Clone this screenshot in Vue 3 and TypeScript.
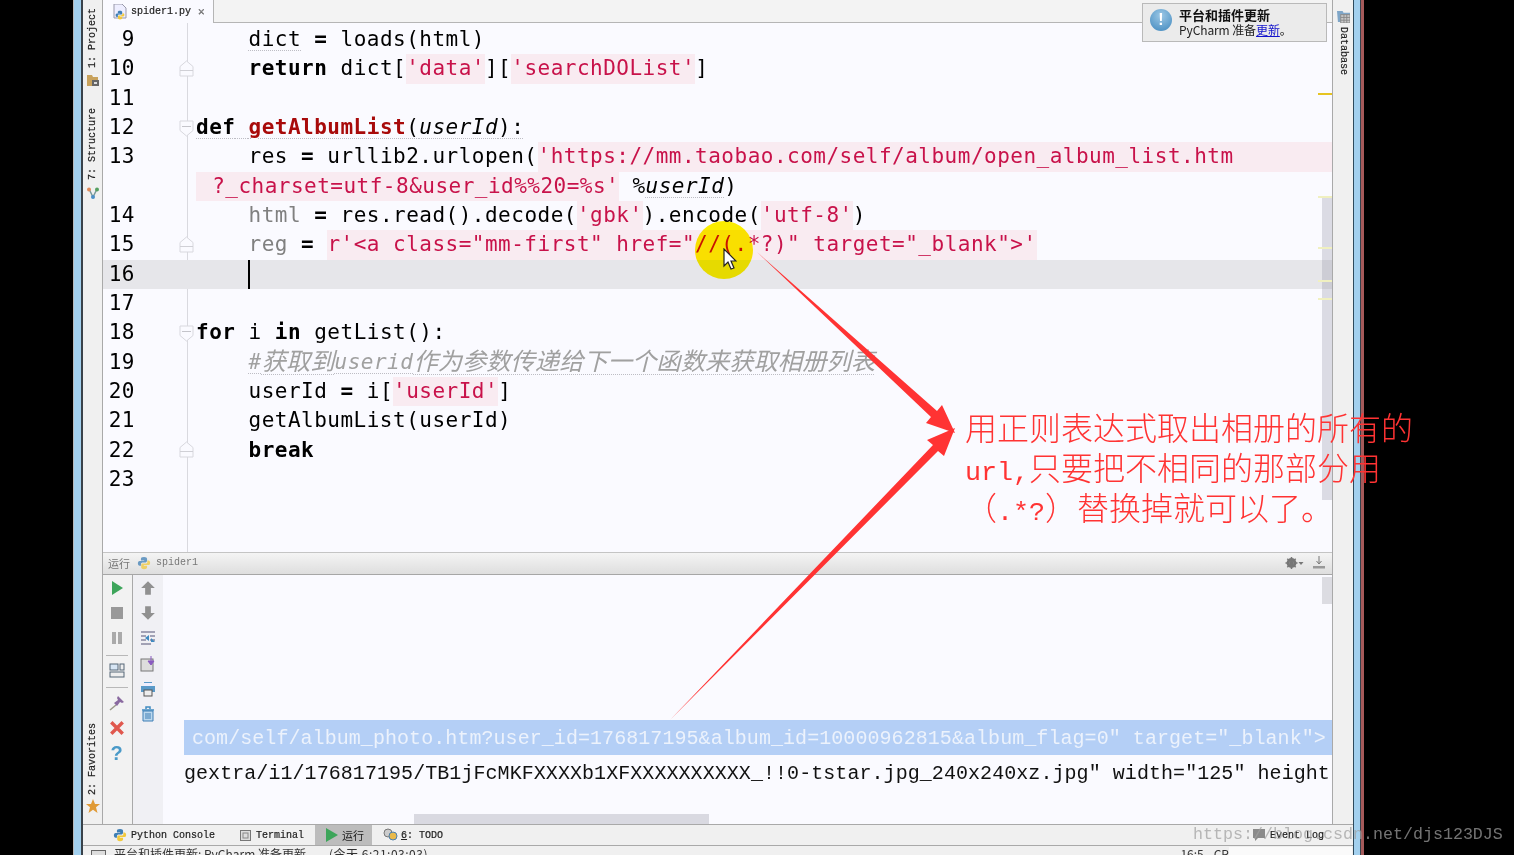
<script setup lang="ts">
type Token = { t: string; c?: string };
type Line = { n: string; fold?: "up" | "down"; tokens: Token[]; cur?: boolean };

const s = (t: string, c = ""): Token => ({ t, c });
const eq = [s(" "), s("=", "kw"), s(" ")];

const lines: Line[] = [
  { n: "9", tokens: [s("    "), s("dict", "wave"), ...eq, s("loads(html)")] },
  { n: "10", fold: "up", tokens: [s("    "), s("return", "kw"), s(" dict["), s("'data'", "str"), s("]["), s("'searchDOList'", "str"), s("]")] },
  { n: "11", tokens: [] },
  { n: "12", fold: "down", tokens: [s("def", "kw wave"), s(" ", "wave"), s("getAlbumList", "fn wave"), s("(", "wave"), s("userId", "it wave"), s("):", "wave")] },
  { n: "13", tokens: [s("    res"), ...eq, s("urllib2.urlopen("), s("'https://mm.taobao.com/self/album/open_album_list.htm", "str fill")] },
  { n: "", tokens: [s(" ?_charset=utf-8&user_id%%20=%s'", "str shift"), s(" %"), s("userId", "it wave"), s(")")] },
  { n: "14", tokens: [s("    "), s("html", "dim"), ...eq, s("res.read().decode("), s("'gbk'", "str"), s(").encode("), s("'utf-8'", "str"), s(")")] },
  { n: "15", fold: "up", tokens: [s("    "), s("reg", "dim"), ...eq, s("r'<a class=\"mm-first\" href=\"//(.*?)\" target=\"_blank\">'", "str")] },
  { n: "16", cur: true, tokens: [s("    "), s("", "caret")] },
  { n: "17", tokens: [] },
  { n: "18", fold: "down", tokens: [s("for", "kw"), s(" i "), s("in", "kw"), s(" getList():")] },
  { n: "19", tokens: [s("    "), s("#", "cm wave"), s("获取到", "cm cjk wave"), s("userid", "cm wave"), s("作为参数传递给下一个函数来获取相册列表", "cm cjk wave")] },
  { n: "20", tokens: [s("    userId"), ...eq, s("i["), s("'userId'", "str"), s("]")] },
  { n: "21", tokens: [s("    getAlbumList(userId)")] },
  { n: "22", fold: "up", tokens: [s("    "), s("break", "kw")] },
  { n: "23", tokens: [] },
];

const selected = 'com/self/album_photo.htm?user_id=176817195&album_id=10000962815&album_flag=0" target="_blank">';
const plain = 'gextra/i1/176817195/TB1jFcMKFXXXXb1XFXXXXXXXXXX_!!0-tstar.jpg_240x240xz.jpg" width="125" height';
const stripes = [196, 247, 280, 298];
const stripeTop = (y: number) => `${y - 23}px`;
</script>

<template>
  <div class="root">
    <svg class="defs" width="0" height="0">
      <defs>
        <symbol id="py" viewBox="0 0 16 16">
          <path d="M8 1C5 1 4.500 2 4.500 3.200V5H8.200V5.600H3C1.600 5.600 1 6.800 1 8.300S1.700 11 3 11H4.500V9.200C4.500 8 5.500 7.300 6.500 7.300H9.800C10.800 7.300 11.500 6.500 11.500 5.500V3.200C11.500 2 10.500 1 8 1Z" fill="#3f7fb5" />
          <path d="M8 15C11 15 11.500 14 11.500 12.800V11H7.800V10.400H13C14.400 10.400 15 9.200 15 7.700S14.300 5 13 5H11.800V6.800C11.800 8 10.800 8.700 9.800 8.700H6.500C5.500 8.700 4.800 9.500 4.800 10.500V12.800C4.800 14 5.500 15 8 15Z" fill="#f2c93c" />
        </symbol>
      </defs>
    </svg>

    <div class="frame-left"></div>
    <div class="ide">
      <div class="workspace">
        <aside class="bar-left">
          <span class="vtext">1: Project</span>
          <svg class="bar-ic first" viewBox="0 0 12 12"><path d="M0 1H5L6 3H11V6H12V12H0Z" fill="#c8a25c" /><rect x="5" y="6" width="7" height="6" fill="#666" /><rect x="7" y="8" width="3" height="2" fill="#ddd" /></svg>
          <span class="vtext structure">7: Structure</span>
          <svg class="bar-ic second" viewBox="0 0 12 12"><path d="M2 2L6 10L10 2" fill="none" stroke="#7a9a9a" stroke-width="1.500" /><circle cx="2" cy="2.500" r="2" fill="#e08a5a" /><circle cx="10" cy="2.500" r="2" fill="#55a060" /><circle cx="6" cy="10" r="2" fill="#4c8fc8" /></svg>
          <span class="grow"></span>
          <span class="vtext">2: Favorites</span>
          <svg class="star" viewBox="0 0 14 14"><path d="M7 0L9 5H14L10 8.300L11.500 14L7 10.700L2.500 14L4 8.300L0 5H5Z" fill="#e09a35" /></svg>
        </aside>

        <main class="center">
          <div class="tabbar">
            <div class="tab">
              <svg class="tab-ic" viewBox="0 0 14 16"><path d="M1 0H9L13 4V14H1Z" fill="#eef" stroke="#99a" /><use href="#py" x="2" y="6" width="10" height="10" /></svg>
              <span>spider1.py</span>
              <span class="x">✕</span>
            </div>
          </div>

          <section class="editor">
            <div v-for="l in lines" :key="l.n + l.tokens.length" class="row" :class="{ cur: l.cur }">
              <div class="num">{{ l.n }}</div>
              <div class="foldcell">
                <svg v-if="l.fold === 'up'" class="fold" viewBox="0 0 15 18"><path d="M7.500 1L14 6.500V16H1V6.500Z" fill="#fafaff" stroke="#d8d8de" /><path d="M1 10.500H14" stroke="#d0d0d6" /></svg>
                <svg v-else-if="l.fold === 'down'" class="fold" viewBox="0 0 15 18"><path d="M1 2H14V11.500L7.500 17L1 11.500Z" fill="#fafaff" stroke="#d8d8de" /><path d="M3 7.500H12" stroke="#c4c4ca" /></svg>
              </div>
              <div class="code">
                <span v-for="(tk, i) in l.tokens" :key="i" class="tok" :class="tk.c">{{ tk.t }}</span>
              </div>
            </div>
            <div class="vscroll"></div>
            <div class="stripe-top"></div>
            <div v-for="y in stripes" :key="y" class="stripe" :style="{ top: stripeTop(y) }"></div>
          </section>

          <header class="toolhead">
            <span class="run-label">运行</span>
            <svg class="head-py" viewBox="0 0 16 16"><use href="#py" /></svg>
            <span class="run-name">spider1</span>
            <span class="grow"></span>
            <svg class="gear" viewBox="0 0 18 12">
              <circle cx="6" cy="6" r="3.600" fill="none" stroke="#777" stroke-width="2.600" />
              <path d="M6 0V12M0 6H12M1.800 1.800L10.200 10.200M10.200 1.800L1.800 10.200" stroke="#777" stroke-width="1.500" />
              <path d="M13 5H18L15.500 8Z" fill="#777" />
            </svg>
            <svg class="dl" viewBox="0 0 12 13"><path d="M6 0V7M3.500 5L6 8L8.500 5" fill="none" stroke="#777" /><path d="M0 10H12V12.500H0Z" fill="#999" /></svg>
          </header>

          <section class="toolbody">
            <div class="strip one">
              <svg class="ic" viewBox="0 0 14 16"><path d="M2 1L13 8L2 15Z" fill="#3da55a" /></svg>
              <svg class="ic" viewBox="0 0 14 16"><rect x="1" y="2" width="12" height="12" fill="#999" /></svg>
              <svg class="ic" viewBox="0 0 14 16"><path d="M2 2H6V14H2ZM8 2H12V14H8Z" fill="#aaa" /></svg>
              <span class="sep"></span>
              <svg class="ic" viewBox="0 0 16 16"><rect x="1" y="1" width="8" height="6" fill="#d7e6f5" stroke="#567" /><rect x="11" y="1" width="4" height="6" fill="#eee" stroke="#567" /><rect x="1" y="9" width="14" height="5" fill="#eee" stroke="#567" /></svg>
              <span class="sep"></span>
              <svg class="ic" viewBox="0 0 16 16"><path d="M1 15L7 10" stroke="#998" stroke-width="1.500" /><path d="M9 1L15 7L13 8L11 7L8 11L5 8L9 5L8 3Z" fill="#8a6aa0" /></svg>
              <svg class="ic" viewBox="0 0 14 14"><path d="M2 2L12 12M12 2L2 12" stroke="#e0584e" stroke-width="3" /></svg>
              <span class="q">?</span>
            </div>
            <div class="strip two">
              <svg class="ic" viewBox="0 0 14 14"><path d="M7 1L13 7H9.500V13H4.500V7H1Z" fill="#909090" /></svg>
              <svg class="ic" viewBox="0 0 14 14"><path d="M7 13L13 7H9.500V1H4.500V7H1Z" fill="#909090" /></svg>
              <svg class="ic" viewBox="0 0 16 16"><path d="M1 2H15M1 14H11M1 6H6M10 6H15M1 10H6M10 10H15" stroke="#557" stroke-width="1.200" /><path d="M5 8L9 5V11Z" fill="#3f8ac0" /><path d="M11 8L15 12H11Z" fill="#3f8ac0" /></svg>
              <svg class="ic" viewBox="0 0 16 16"><rect x="1" y="3" width="12" height="12" fill="#ddd" stroke="#777" /><path d="M11 0V7M8 5L11 9L14 5Z" fill="#8a5ac0" stroke="#8a5ac0" /></svg>
              <svg class="ic" viewBox="0 0 16 16"><path d="M4 1H12V5H15V11H12V15H4V11H1V5H4Z" fill="#5a9ac8" /><rect x="4" y="9" width="8" height="6" fill="#eee" stroke="#555" /><rect x="4" y="2" width="8" height="3" fill="#eef" /></svg>
              <svg class="ic" viewBox="0 0 14 16"><path d="M1 4H13M5 3V1H9V3" fill="none" stroke="#3f8ac0" stroke-width="1.500" /><path d="M2 5H12V15H2Z" fill="#bcd8ee" stroke="#3f7fb5" /><path d="M5 7V13M7 7V13M9 7V13" stroke="#3f7fb5" /></svg>
            </div>
            <div class="console">
              <div class="con-row sel">{{ selected }}</div>
              <div class="con-row low">{{ plain }}</div>
              <div class="vscroll2"></div>
              <div class="hscroll"></div>
            </div>
          </section>
        </main>

        <aside class="bar-right">
          <svg class="db" viewBox="0 0 14 14"><path d="M0 1H6L7 3H14V5H4V13H1Z" fill="#7fa6c8" /><rect x="4" y="5" width="10" height="9" fill="#c8c8c8" stroke="#888" /><path d="M4 8H14M4 11H14M7.500 5V14M10.500 5V14" stroke="#888" /></svg>
          <span class="vright">Database</span>
        </aside>
      </div>

      <nav class="bottom">
        <span class="bt py"><svg class="bt-ic" viewBox="0 0 16 16"><use href="#py" /></svg>Python Console</span>
        <span class="bt term"><svg class="term-ic" viewBox="0 0 11 11"><rect x=".5" y=".5" width="10" height="10" fill="#ddd" stroke="#777" /><rect x="3" y="3" width="5" height="5" fill="none" stroke="#888" /></svg>Terminal</span>
        <span class="bt active"><svg class="play" viewBox="0 0 12 14"><path d="M0 0L12 7L0 14Z" fill="#3da55a" /></svg><span class="run-cn">运行</span></span>
        <span class="bt todo"><svg class="todo-ic" viewBox="0 0 15 14"><circle cx="5" cy="5" r="4" fill="#ccc" stroke="#777" /><circle cx="10" cy="8" r="4" fill="#e8b94a" stroke="#4a7fb0" /></svg><u>6</u>: TODO</span>
        <span class="grow"></span>
        <svg class="chat" viewBox="0 0 12 12"><path d="M0 0H12V9H5L2 12V9H0Z" fill="#8a8a8a" /></svg>
        <span class="bt event">Event Log</span>
      </nav>

      <footer class="status">
        <span class="check"></span>
        <span class="msg">平台和插件更新: PyCharm 准备更新</span>
        <span class="when">(今天 6:21:03:03)</span>
        <span class="grow"></span>
        <span class="pos">16:5</span>
        <span class="crlf">CR</span>
        <span class="memo"></span>
      </footer>
    </div>
    <div class="frame-right"></div>

    <div class="balloon">
      <span class="b-ic">!</span>
      <div class="b-text">
        <div class="b-title">平台和插件更新</div>
        <div class="b-msg">PyCharm 准备<a class="b-link">更新</a>。</div>
      </div>
    </div>

    <div class="spot"></div>
    <svg class="pointer" viewBox="0 0 14 22"><path d="M1 1V18L5 14L8 21L11 20L8 13H13Z" fill="#fff" stroke="#222" stroke-width="1.200" /></svg>

    <svg class="arrows" viewBox="0 0 1514 855">
      <polygon points="757,252 937,411 942,405 955,433 926,423 931,417" fill="#f33" />
      <polygon points="670,720 933,445 927,440 955,428 944,456 938,451" fill="#f33" />
    </svg>

    <div class="note">
      <div class="note-line">用正则表达式取出相册的所有的</div>
      <div class="note-line"><span class="latin">url,</span>只要把不相同的那部分用</div>
      <div class="note-line">（<span class="latin">.*?</span>）替换掉就可以了。</div>
    </div>

    <div class="mark">https://blog.csdn.net/djs123DJS</div>
  </div>
</template>

<style>
html, body { margin: 0; background: #000; }
</style>

<style scoped>
.root {
  position: relative;
  display: flex;
  width: 1514px;
  height: 855px;
  overflow: hidden;
  background: #000;
  font-family: "Liberation Mono", "Noto Sans CJK SC", monospace;
}
.defs { position: absolute; }
.grow { flex: 1; }
.frame-left {
  width: 10px;
  margin-left: 73px;
  background: linear-gradient(90deg, #b9b9b9 0 1px, #a3d0ee 1px 8px, #39424a 8px);
}
.frame-right {
  width: 11px;
  background: linear-gradient(90deg, #2e4a5c 0 1px, #a3d0ee 1px 7px, #34424c 7px 8px, #a55a5a 8px);
}
.ide {
  display: flex;
  flex-direction: column;
  width: 1270px;
  background: #f0f0f0;
}
.workspace { display: flex; height: 824px; }

/* side bars */
.bar-left {
  display: flex;
  flex-direction: column;
  align-items: center;
  width: 20px;
  padding: 8px 0 11px;
  box-sizing: border-box;
  background: #f0f0f0;
  border-right: 1px solid #a9a9a9;
}
.vtext {
  writing-mode: vertical-rl;
  transform: rotate(180deg);
  font-size: 10px;
  line-height: 12px;
  color: #222;
  white-space: pre;
  -webkit-text-stroke: .2px #222;
}
.bar-ic { width: 12px; height: 12px; flex: none; }
.bar-ic.first { margin-top: 6px; }
.structure { margin-top: 22px; }
.bar-ic.second { margin-top: 7px; }
.star { width: 14px; height: 14px; margin-top: 4px; flex: none; }
.bar-right {
  display: flex;
  flex-direction: column;
  align-items: center;
  width: 21px;
  padding-top: 10px;
  box-sizing: border-box;
  border-left: 1px solid #a9a9a9;
  background: #f0f0f0;
}
.db { width: 13px; height: 13px; flex: none; }
.vright {
  writing-mode: vertical-rl;
  margin-top: 4px;
  font-size: 10px;
  line-height: 12px;
  color: #222;
  -webkit-text-stroke: .2px #222;
}

/* center */
.center { display: flex; flex-direction: column; width: 1229px; }
.tabbar {
  display: flex;
  height: 23px;
  box-sizing: border-box;
  background: #f3f3f3;
  border-bottom: 1px solid #b5b5b5;
}
.tab {
  display: flex;
  align-items: center;
  width: 111px;
  height: 23px;
  padding-left: 10px;
  box-sizing: border-box;
  background: #fafaff;
  border-right: 1px solid #b5b5b5;
  font-size: 10px;
  color: #222;
  -webkit-text-stroke: .2px #222;
}
.tab-ic { width: 14px; height: 16px; margin-right: 4px; flex: none; }
.x { margin-left: 7px; color: #888; font-size: 11px; }

.editor {
  position: relative;
  height: 529px;
  padding-top: 2px;
  box-sizing: border-box;
  overflow: hidden;
  background: linear-gradient(#d9d9df, #d9d9df) 84px 0 / 1px 100% no-repeat, #fafaff;
  font-family: "DejaVu Sans Mono", "Noto Sans CJK SC", monospace;
  font-size: 21px;
  letter-spacing: .49px;
  color: #000;
}
.row { display: flex; height: 29.33px; line-height: 29.33px; }
.row.cur { background: #e6e6ea; }
.num { width: 32px; flex: none; text-align: right; }
.foldcell { width: 15px; margin-left: 44px; flex: none; display: flex; align-items: center; }
.fold { width: 15px; height: 18px; }
.code { display: flex; flex: 1; min-width: 0; margin-left: 2px; white-space: pre; }
.tok { flex: none; }
.kw { font-weight: 700; }
.fn { font-weight: 700; color: #a80a0a; }
.it { font-style: italic; }
.dim { color: #808080; }
.str { color: #c8124a; background: #f9ebf1; }
.shift { padding-left: 3px; }
.fill { flex: 1; }
.cm { color: #a0a0a0; font-style: italic; }
.cjk { font-size: 24.3px; letter-spacing: 0; font-family: "Noto Sans CJK SC", sans-serif; font-weight: 400; line-height: 24px; }
.wave {
  text-decoration: underline dotted #bdbdc4 1px;
  text-underline-offset: 4px;
}
.caret {
  width: 2px;
  height: 29px;
  margin-left: -1px;
  background: #000;
}
.vscroll {
  position: absolute;
  right: 0;
  top: 173px;
  width: 10px;
  height: 304px;
  background: rgba(150, 150, 165, .3);
}
.stripe-top {
  position: absolute;
  right: 0;
  top: 70px;
  width: 14px;
  height: 2px;
  background: #e6c422;
}
.stripe {
  position: absolute;
  right: 0;
  width: 14px;
  height: 2px;
  background: #f0f0c0;
}

.toolhead {
  display: flex;
  align-items: center;
  height: 23px;
  box-sizing: border-box;
  padding: 0 7px 2px 5px;
  background: linear-gradient(#f4f4f4, #dedede);
  border-top: 1px solid #c4c4c4;
  border-bottom: 1px solid #a6a6a6;
  font-size: 10px;
  color: #777;
}
.run-label { font-size: 11px; }
.head-py { width: 14px; height: 14px; margin: 0 5px 0 7px; opacity: .75; }
.gear { width: 19px; height: 12px; margin-right: 9px; }
.dl { width: 12px; height: 13px; }

.toolbody { display: flex; flex: 1; min-height: 0; }
.strip {
  display: flex;
  flex-direction: column;
  align-items: center;
  flex: none;
  box-sizing: border-box;
  padding-top: 5px;
  background: #f2f2f2;
}
.strip.one { width: 30px; padding-right: 2px; border-right: 1px solid #a9a9a9; }
.strip.two { width: 30px; background: #f0f0f4; }
.ic { width: 16px; height: 16px; margin-bottom: 9.200px; flex: none; }
.sep { width: 22px; height: 1px; margin: -1px 0 7px; background: #b8b8b8; flex: none; }
.q {
  font: 700 20px/16px "Liberation Sans", sans-serif;
  color: #4a9ac8;
}
.console {
  position: relative;
  flex: 1;
  min-width: 0;
  padding: 145px 0 0 21px;
  overflow: hidden;
  background: #fafaff;
  font-size: 20px;
  letter-spacing: .06px;
  color: #111;
  white-space: pre;
}
.con-row { height: 35px; line-height: 37px; overflow: hidden; }
.con-row.low { line-height: 38px; }
.sel {
  padding-left: 8px;
  background: #b4cff6;
  color: #ecf2fc;
}
.vscroll2 {
  position: absolute;
  right: 0;
  top: 2px;
  width: 10px;
  height: 27px;
  background: #dcdce2;
}
.hscroll {
  position: absolute;
  left: 251px;
  bottom: 0;
  width: 295px;
  height: 10px;
  background: #d9d9e1;
}

.bottom {
  display: flex;
  align-items: center;
  height: 22px;
  box-sizing: border-box;
  background: #f0f0f0;
  border-top: 1px solid #a9a9a9;
  border-bottom: 1px solid #a9a9a9;
  font-size: 10px;
  color: #222;
  -webkit-text-stroke: .2px #222;
}
.bt { display: flex; align-items: center; height: 20px; }
.bt-ic { width: 14px; height: 14px; margin-right: 4px; }
.py { margin-left: 30px; }
.term { margin-left: 25px; }
.term-ic { width: 11px; height: 11px; margin-right: 5px; }
.active {
  width: 57px;
  margin-left: 11px;
  padding-left: 11px;
  box-sizing: border-box;
  background: #bcbcbc;
}
.play { width: 12px; height: 14px; margin-right: 4px; }
.run-cn { font-size: 11px; -webkit-text-stroke: 0; }
.todo { margin-left: 11px; }
.todo-ic { width: 15px; height: 14px; margin-right: 3px; }
.chat { width: 12px; height: 12px; margin-right: 5px; }
.event { margin-right: 29px; }

.status {
  display: flex;
  align-items: flex-start;
  flex: 1;
  min-height: 0;
  overflow: hidden;
  font: 12px/16px "Noto Sans CJK SC", "Liberation Sans", sans-serif;
  color: #333;
  white-space: pre;
}
.check {
  width: 13px;
  height: 10px;
  margin: 4px 8px 0 8px;
  background: #ddd;
  border: 1px solid #666;
  flex: none;
}
.when { margin-left: 23px; letter-spacing: .5px; }
.crlf { margin: 0 0 0 10px; }
.memo {
  width: 123px;
  height: 10px;
  margin: 1px 1px 0 0;
  background: #fafafa;
  flex: none;
}

/* floating things */
.balloon {
  position: absolute;
  left: 1142px;
  top: 3px;
  display: flex;
  width: 185px;
  height: 39px;
  box-sizing: border-box;
  padding: 3px 0 0 7px;
  background: #ebebeb;
  border: 1px solid #b9b9b9;
}
.b-ic {
  width: 22px;
  height: 22px;
  margin-top: 2px;
  border-radius: 50%;
  background: radial-gradient(circle at 50% 30%, #9cc8e6, #3f87bd);
  color: #fff;
  font: 700 16px/22px "Liberation Sans", sans-serif;
  text-align: center;
}
.b-text { margin-left: 7px; font-family: "Noto Sans CJK SC", "Liberation Sans", sans-serif; color: #222; }
.b-title { font-size: 13px; line-height: 15px; font-weight: 700; color: #111; }
.b-msg { font-size: 12px; line-height: 15px; white-space: pre; letter-spacing: -.1px; }
.b-link { color: #1212cc; text-decoration: underline; }

.spot {
  position: absolute;
  left: 695px;
  top: 221px;
  width: 58px;
  height: 58px;
  border-radius: 50%;
  background: #fff200;
  mix-blend-mode: multiply;
}
.pointer { position: absolute; left: 723px; top: 248px; width: 14px; height: 22px; }
.arrows { position: absolute; left: 0; top: 0; width: 1514px; height: 855px; pointer-events: none; }
.note {
  position: absolute;
  left: 965px;
  top: 406px;
  width: 460px;
  font: 300 32px/40px "Noto Sans CJK SC", sans-serif;
  color: #f33;
  white-space: pre;
}
.note-line { height: 40px; }
.latin { font-family: "Liberation Mono", monospace; font-size: 26.700px; }
.mark {
  position: absolute;
  left: 1193px;
  top: 825px;
  font-size: 16.670px;
  line-height: 20px;
  color: rgba(160, 160, 160, .72);
  white-space: pre;
}
</style>
